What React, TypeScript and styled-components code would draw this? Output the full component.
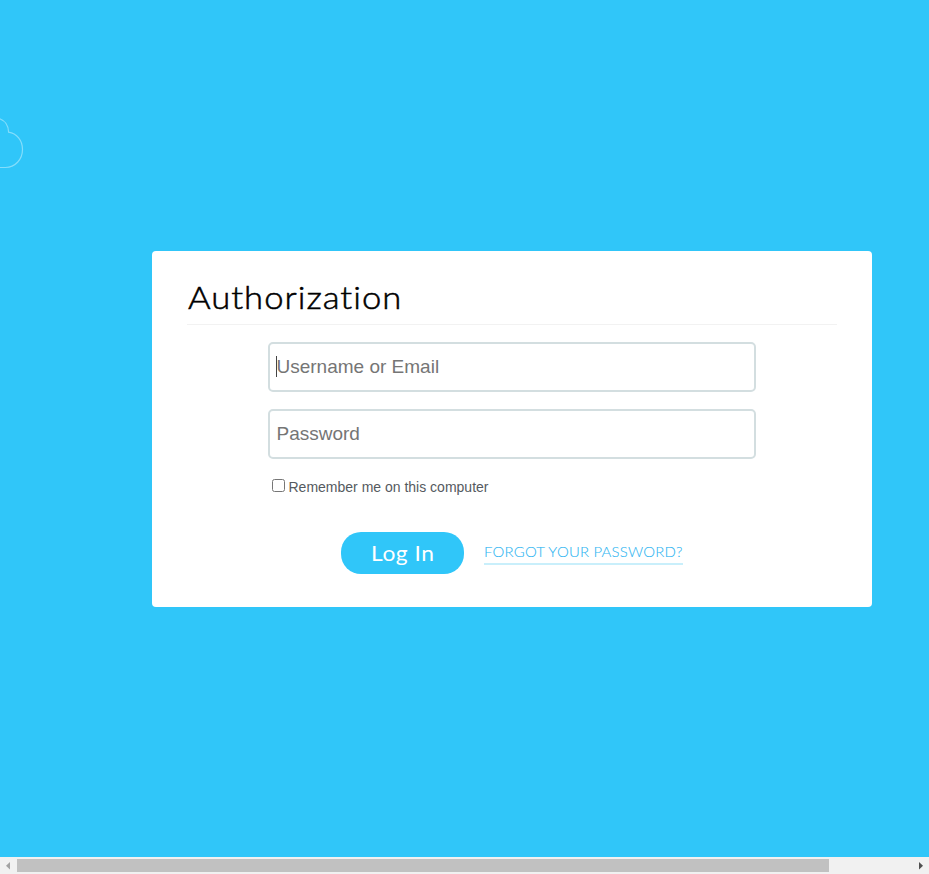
import React from "react";
import styled, { createGlobalStyle } from "styled-components";

const GlobalStyle = createGlobalStyle`
  html, body { margin: 0; padding: 0; overflow: hidden; }
  *, *::before, *::after { box-sizing: border-box; }
`;

const Page = styled.div`
  display: flex;
  flex-direction: column;
  height: 874px;
  width: 929px;
  overflow: hidden;
  font-family: "Liberation Sans", Arial, sans-serif;
`;

const Sky = styled.main`
  position: relative;
  height: 857px;
  padding: 251px 57px 0 152px;
  background: #30c6f9;
`;

const Cloud = styled.svg`
  position: absolute;
  left: 0;
  top: 112px;
  fill: none;
  stroke: #83ddfb;
  stroke-width: 1.2;
`;

const Card = styled.form`
  display: flex;
  flex-direction: column;
  height: 356px;
  padding: 28px 35px 0;
  background: #fff;
  border-radius: 4px;
`;

const Title = styled.h1`
  margin: 0;
  height: 46px;
  padding-left: 1px;
  border-bottom: 1px solid #f2f2f2;
  font: 300 31.5px/36px Lato, sans-serif;
  color: #000;
`;

const WideText = styled.span<{ $stretch: number; $spacing: number; $stroke?: number }>`
  display: inline-block;
  transform: scaleX(${(p) => p.$stretch});
  transform-origin: left center;
  letter-spacing: ${(p) => p.$spacing}px;
  -webkit-text-stroke: ${(p) => p.$stroke ?? 0}px currentColor;
`;

const Fields = styled.div`
  display: flex;
  flex-direction: column;
  gap: 17px;
  width: 488px;
  margin: 17px 0 0 81px;
`;

const Field = styled.div`
  position: relative;
  height: 50px;
`;

const Input = styled.input`
  display: block;
  width: 100%;
  height: 50px;
  padding: 0 7px 0 6.5px;
  border: 2px solid #d3dee0;
  border-radius: 5px;
  background: #fff;
  outline: none;
  font: 19px "Liberation Sans", Arial, sans-serif;
  &::placeholder { color: #757575; opacity: 1; }
`;

const Caret = styled.span`
  position: absolute;
  left: 8px;
  top: 14px;
  width: 1px;
  height: 21px;
  background: #444;
`;

const Remember = styled.label`
  display: flex;
  align-items: flex-start;
  gap: 3.5px;
  height: 20px;
  margin: 20px 0 0 85px;
  font-size: 14px;
  line-height: 16px;
  color: #555a60;
`;

const Checkbox = styled.input`
  width: 13px;
  height: 13px;
  margin: 0;
`;

const Actions = styled.div`
  display: flex;
  gap: 20px;
  margin: 33px 0 0 154px;
`;

const LoginButton = styled.button`
  width: 123px;
  height: 42px;
  padding: 0 0 1px 30px;
  border: 0;
  border-radius: 20px;
  background: #30c6f9;
  color: #fff;
  font: 400 20.5px/40px Lato, sans-serif;
  text-align: left;
`;

const ForgotLink = styled.a`
  width: 199px;
  height: 22px;
  margin-top: 11px;
  border-bottom: 2px solid #c9effb;
  font: 300 14px/18px Lato, sans-serif;
  white-space: nowrap;
  color: #30b6f2;
`;

const Scrollbar = styled.div`
  display: flex;
  align-items: center;
  height: 17px;
  background: #f1f1f1;
`;

const ArrowBox = styled.svg`
  width: 17px;
  height: 17px;
  flex: none;
`;

const Track = styled.div`
  flex: 1;
`;

const Thumb = styled.div`
  width: 812px;
  height: 13px;
  background: #c1c1c1;
`;

export default function App() {
  return (
    <Page>
      <GlobalStyle />
      <Sky>
        <Cloud width="26" height="60" viewBox="0 0 26 60">
          <path d="M-1 6.5C5 8.5 8.5 13.5 8.6 20.2C16.8 21.4 22.5 28.5 22.5 37.5C22.5 47.5 15 55.5 5.5 55.5H-1" />
        </Cloud>
        <Card onSubmit={(e) => e.preventDefault()}>
          <Title>
            <WideText $stretch={1.1} $spacing={0.9} $stroke={0.5}>Authorization</WideText>
          </Title>
          <Fields>
            <Field>
              <Input type="text" placeholder="Username or Email" />
              <Caret />
            </Field>
            <Field>
              <Input type="password" placeholder="Password" />
            </Field>
          </Fields>
          <Remember>
            <Checkbox type="checkbox" />
            <span>Remember me on this computer</span>
          </Remember>
          <Actions>
            <LoginButton type="submit">
              <WideText $stretch={1.11} $spacing={0.5}>Log In</WideText>
            </LoginButton>
            <ForgotLink>
              <WideText $stretch={1.064} $spacing={0.2} $stroke={0.1}>FORGOT YOUR PASSWORD?</WideText>
            </ForgotLink>
          </Actions>
        </Card>
      </Sky>
      <Scrollbar>
        <ArrowBox viewBox="0 0 17 17"><path d="M10 5v7.5L6 8.75z" fill="#a3a3a3" /></ArrowBox>
        <Track><Thumb /></Track>
        <ArrowBox viewBox="0 0 17 17"><path d="M7 5v7.5l4-3.75z" fill="#505050" /></ArrowBox>
      </Scrollbar>
    </Page>
  );
}
